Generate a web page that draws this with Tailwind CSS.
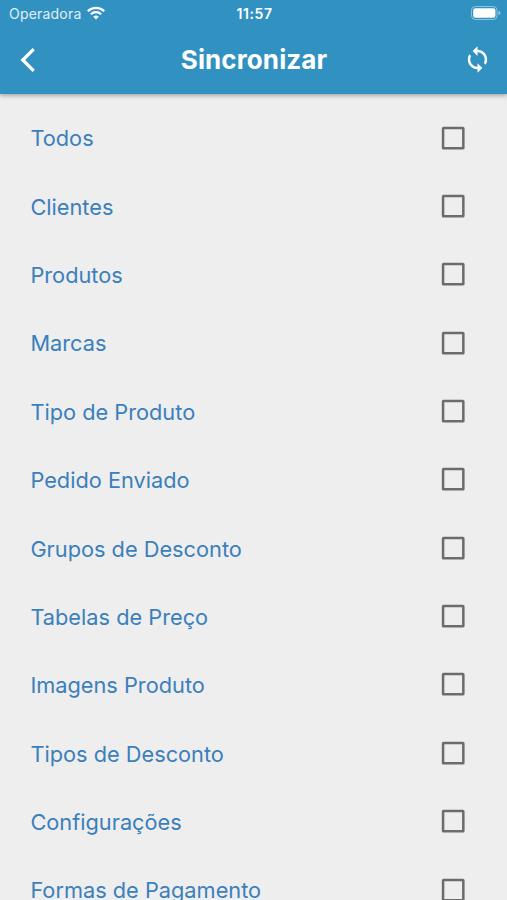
<!DOCTYPE html>
<html lang="pt-BR">

<head>
    <meta charset="UTF-8" />
    <meta name="viewport" content="width=device-width, initial-scale=1.0" />
    <title>Sincronizar</title>
    <script src="https://cdn.jsdelivr.net/npm/@tailwindcss/browser@4"></script>
</head>

<body class="h-screen overflow-hidden bg-[#eeeeee] font-['Inter',sans-serif]">
    <header class="relative h-[94px] bg-[#3192c2] text-white shadow-[0_1px_5px_rgba(0,0,0,0.4)]">
        <!-- Status bar -->
        <div class="grid h-[26px] grid-cols-[1fr_auto_1fr] items-center pl-[9px] pr-[6px]">
            <div class="flex items-center gap-[6px]">
                <span class="text-[14px] tracking-[0.2px] text-white/85">Operadora</span>
                <svg class="h-[14px] w-[18px]" viewBox="0 0 18 14" fill="none" stroke="currentColor" stroke-width="2.2">
                    <path d="M.8 5.2a11.6 11.6 0 0 1 16.4 0" />
                    <path d="M3.9 8.2a7.3 7.3 0 0 1 10.2 0" />
                    <path d="M9 13.6 6.2 10.8a4 4 0 0 1 5.6 0Z" fill="currentColor" stroke="none" />
                </svg>
            </div>
            <span class="pr-px text-center text-[14px] font-semibold tracking-[0.6px]">11:57</span>
            <svg class="h-[14px] w-[30px] justify-self-end" viewBox="0 0 30 14" fill="none">
                <rect x="0.5" y="0.5" width="25.5" height="13" rx="3.8" stroke="white" stroke-opacity="0.45" />
                <rect x="2.2" y="2.2" width="22.2" height="9.6" rx="2.2" fill="white" />
                <path d="M27.5 4.8v4.4c1.2-.4 1.9-1.2 1.9-2.2s-.7-1.8-1.9-2.2Z" fill="white" fill-opacity="0.5" />
            </svg>
        </div>

        <!-- Toolbar -->
        <div class="grid h-[67px] grid-cols-[1fr_auto_1fr] items-center pl-[20px] pr-[15px]">
            <button class="w-[31px]" aria-label="Voltar">
                <svg class="h-[26px] w-[16px]" viewBox="0 0 16 26" fill="none" stroke="currentColor" stroke-width="3.2">
                    <path d="M13.7 2.2 2.8 13l10.9 10.8" />
                </svg>
            </button>
            <h1 class="pr-[4px] text-[26px] leading-[38px] font-bold tracking-[0.1px]">Sincronizar</h1>
            <button class="justify-self-end" aria-label="Sincronizar">
                <svg class="size-[29px]" viewBox="0 0 24 24" fill="currentColor">
                    <path d="M12 4V1L8 5l4 4V6c3.31 0 6 2.69 6 6 0 1.01-.25 1.97-.7 2.8l1.46 1.46C19.54 15.03 20 13.57 20 12c0-4.42-3.58-8-8-8zm0 14c-3.31 0-6-2.69-6-6 0-1.01.25-1.97.7-2.8L5.24 7.74C4.46 8.97 4 10.43 4 12c0 4.42 3.58 8 8 8v3l4-4-4-4v3z" />
                </svg>
            </button>
        </div>
    </header>

    <!-- Lista de itens -->
    <ul id="lista" class="pt-[9.6px]"></ul>

    <script>
        const itens = [
            'Todos',
            'Clientes',
            'Produtos',
            'Marcas',
            'Tipo de Produto',
            'Pedido Enviado',
            'Grupos de Desconto',
            'Tabelas de Preço',
            'Imagens Produto',
            'Tipos de Desconto',
            'Configurações',
            'Formas de Pagamento'
        ];

        document.getElementById('lista').innerHTML = itens.map(item => `
            <li class="flex h-[68.37px] items-center justify-between pl-[30.4px] pr-[39px]">
                <span class="pt-[1.8px] text-[21.75px] text-[#3b7fbb]">${item}</span>
                <svg class="size-[30.4px]" viewBox="0 0 24 24" fill="none" stroke="#6c6c6c" stroke-width="2">
                    <rect x="4" y="4" width="16" height="16" rx="0.3" />
                </svg>
            </li>
        `).join('');
    </script>
</body>

</html>
